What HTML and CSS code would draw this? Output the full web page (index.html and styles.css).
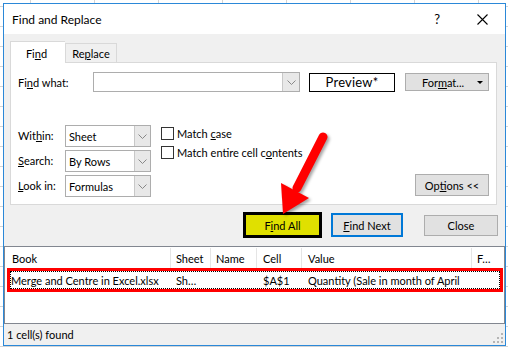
FILE: index.html
```html
<!DOCTYPE html>
<html>
<head>
<meta charset="utf-8">
<link rel="stylesheet" href="styles.css">
</head>
<body>
<div class="dialog">
  <div class="titlebar">
    <span class="title">Find and Replace</span>
    <span class="help">?</span>
    <span class="close-x"><svg width="11" height="11" viewBox="0 0 11 11"><path d="M0.5 0.5 L10.5 10.5 M10.5 0.5 L0.5 10.5" stroke="#000" stroke-width="1.1" fill="none"/></svg></span>
  </div>
  <div class="tabs">
    <div class="tab active"><span>Fi<u>n</u>d</span></div>
    <div class="tab"><span>Re<u>p</u>lace</span></div>
  </div>
  <div class="panel">
    <div class="find-row">
      <span class="lbl-find">Fi<u>n</u>d what:</span>
      <div class="combo find-combo"><span class="combo-field"></span><span class="combo-btn find-btn"><svg width="9" height="5" viewBox="0 0 9 5"><path d="M0.5 0.5 L4.5 4.5 L8.5 0.5" stroke="#888" fill="none"/></svg></span></div>
      <div class="preview">Preview*</div>
      <div class="btn format"><span>For<u>m</u>at...</span><span class="caret"></span></div>
    </div>
    <div class="lower">
      <div class="opts">
        <span class="lbl">Wit<u>h</u>in:</span>
        <div class="combo"><span class="combo-field sel">Sheet</span><span class="combo-btn"><svg width="9" height="5" viewBox="0 0 9 5"><path d="M0.5 0.5 L4.5 4.5 L8.5 0.5" stroke="#888" fill="none"/></svg></span></div>
        <span class="lbl"><u>S</u>earch:</span>
        <div class="combo"><span class="combo-field sel">By Rows</span><span class="combo-btn"><svg width="9" height="5" viewBox="0 0 9 5"><path d="M0.5 0.5 L4.5 4.5 L8.5 0.5" stroke="#888" fill="none"/></svg></span></div>
        <span class="lbl"><u>L</u>ook in:</span>
        <div class="combo"><span class="combo-field sel">Formulas</span><span class="combo-btn"><svg width="9" height="5" viewBox="0 0 9 5"><path d="M0.5 0.5 L4.5 4.5 L8.5 0.5" stroke="#888" fill="none"/></svg></span></div>
      </div>
      <div class="checks">
        <div class="check"><span class="box"></span><span>Match <u>c</u>ase</span></div>
        <div class="check"><span class="box"></span><span>Match entire cell c<u>o</u>ntents</span></div>
      </div>
      <div class="btn options"><span>Op<u>t</u>ions &lt;&lt;</span></div>
    </div>
  </div>
  <div class="actions">
    <div class="btn findall"><span>F<u>i</u>nd All</span></div>
    <div class="btn findnext"><span><u>F</u>ind Next</span></div>
    <div class="btn close"><span>Close</span></div>
  </div>
  <div class="results">
    <div class="cols head">
      <span>Book</span><span>Sheet</span><span>Name</span><span>Cell</span><span>Value</span><span>F…</span>
    </div>
    <div class="hit">
      <div class="cols data">
        <span>Merge and Centre in Excel.xlsx</span><span>Sh…</span><span></span><span>$A$1</span><span>Quantity (Sale in month of April</span><span></span>
      </div>
    </div>
  </div>
  <div class="status">
    <span>1 cell(s) found</span>
    <svg class="grip" width="10" height="10" viewBox="0 0 10 10"><g fill="#b5b5b5"><rect x="8" y="0" width="2" height="2"/><rect x="4" y="4" width="2" height="2"/><rect x="8" y="4" width="2" height="2"/><rect x="0" y="8" width="2" height="2"/><rect x="4" y="8" width="2" height="2"/><rect x="8" y="8" width="2" height="2"/></g></svg>
  </div>
</div>
<svg class="arrow" width="508" height="347" viewBox="0 0 508 347">
  <line x1="323" y1="137" x2="297" y2="188" stroke="#ff0000" stroke-width="9" stroke-linecap="round"/>
  <polygon points="281,183 309,198 283,214" fill="#ff0000"/>
</svg>
</body>
</html>
```
FILE: styles.css
```css
* { box-sizing: border-box; }
html, body { margin: 0; padding: 0; }
body {
  width: 508px;
  height: 347px;
  overflow: hidden;
  font-family: "Segoe UI", Lato, "Noto Sans", sans-serif;
  font-size: 11px;
  color: #000;
  background-color: #fff;
  background-image:
    linear-gradient(to right, #d4d4d4 1px, transparent 1px),
    linear-gradient(to bottom, #d4d4d4 1px, transparent 1px);
  background-size: 64px 20px;
  background-position: 30px 0, 0 6px;
  position: relative;
}
u { text-decoration: underline; text-underline-offset: 1px; }

.dialog {
  margin: 3px 0 0 3px;
  width: 503px;
  height: 343px;
  border: 1px solid #2b88d8;
  background: #f0f0f0;
  display: flex;
  flex-direction: column;
}

.titlebar {
  height: 30px;
  background: #fff;
  display: flex;
  align-items: center;
  padding-left: 8px;
  flex: none;
}
.title { font-size: 12px; flex: 1; }
.help { font-size: 13px; margin-right: 37px; }
.close-x { width: 11px; height: 11px; margin-right: 17px; display: flex; }

.tabs {
  display: flex;
  align-items: flex-end;
  margin: 7px 0 0 6px;
  height: 21px;
  flex: none;
}
.tab {
  height: 19px;
  width: 52px;
  border: 1px solid #d9d9d9;
  border-bottom: none;
  background: #f0f0f0;
  display: flex;
  align-items: center;
  justify-content: center;
  padding-top: 1px;
}
.tab.active {
  width: 55px;
  height: 22px;
  background: #fff;
  margin-bottom: -1px;
  position: relative;
  z-index: 1;
  border-right: none;
  padding-right: 3px;
}

.panel {
  margin: 0 8px 0 6px;
  height: 143px;
  border: 1px solid #d9d9d9;
  background: #fff;
  padding: 9px 7px 7px 7px;
  display: flex;
  flex-direction: column;
  flex: none;
}

.find-row {
  display: flex;
  align-items: center;
  height: 20px;
}
.lbl-find { width: 75px; }
.combo {
  display: flex;
  height: 22px;
  border: 1px solid #adadad;
  background: #fff;
}
.find-combo { width: 207px; height: 20px; }
.combo-field { flex: 1; display: flex; align-items: center; padding-left: 3px; }
.combo-btn {
  width: 16px;
  background: #e8e8e8;
  border-left: 1px solid #c8c8c8;
  display: flex;
  align-items: center;
  justify-content: center;
}
.find-btn { width: 17px; }

.preview {
  margin-left: 9px;
  width: 86px;
  height: 19px;
  border: 1px solid #000;
  display: flex;
  align-items: center;
  justify-content: center;
  font-size: 13px;
  letter-spacing: 0.2px;
}

.btn {
  background: #e1e1e1;
  border: 1px solid #adadad;
  display: flex;
  align-items: center;
  justify-content: center;
}
.format {
  margin-left: 10px;
  width: 84px;
  height: 18px;
  position: relative;
  padding-right: 8px;
}
.caret {
  position: absolute;
  right: 5px;
  top: 7px;
  width: 0;
  height: 0;
  border-left: 3px solid transparent;
  border-right: 3px solid transparent;
  border-top: 3px solid #000;
}

.lower {
  margin-top: 33px;
  display: flex;
  align-items: flex-end;
}
.opts {
  display: grid;
  grid-template-columns: 47px 86px;
  grid-auto-rows: 22px;
  row-gap: 3px;
  align-items: center;
}
.lbl { line-height: 22px; }

.checks {
  align-self: flex-start;
  margin-left: 10px;
  padding-top: 2px;
  flex: 1;
  display: flex;
  flex-direction: column;
  gap: 6px;
}
.check { display: flex; align-items: center; height: 13px; font-size: 11px; }
.box {
  width: 13px;
  height: 13px;
  border: 1px solid #333;
  background: #fff;
  margin-right: 3px;
}
.options {
  width: 74px;
  height: 22px;
  margin-bottom: 1px;
  font-size: 11px;
}

.actions {
  margin-top: 7px;
  height: 26px;
  display: flex;
  align-items: center;
  justify-content: flex-end;
  padding-right: 7px;
  flex: none;
  font-size: 11px;
}
.findall {
  width: 79px;
  height: 26px;
  background: #e0e000;
  border: 3px solid #000;
}
.findnext {
  margin-left: 9px;
  width: 72px;
  height: 24px;
  border: 2px solid #0078d7;
}
.close {
  margin-left: 21px;
  width: 74px;
  height: 21px;
}

.results {
  margin-top: 8px;
  height: 78px;
  border: 1px solid #828790;
  background: #fff;
  flex: none;
}
.cols {
  display: grid;
  grid-template-columns: 166px 40px 46px 45px 170px 1fr;
  align-items: center;
  white-space: nowrap;
}
.cols span { padding-left: 5px; overflow: hidden; }
.head { height: 21px; padding-top: 1px; }
.head span { border-right: 1px solid #e5e5e5; height: 20px; line-height: 22px; }
.head span:first-child { padding-left: 7px; }
.head span:nth-child(4), .head span:nth-child(5) { padding-left: 6px; }
.head span:last-child { border-right: none; }

.hit {
  margin-left: 2px;
  width: 496px;
  height: 24px;
  border: 3px solid #ff0000;
}
.data {
  height: 18px;
  border: 1px dotted #000;
  grid-template-columns: 160px 40px 46px 45px 170px 1fr;
}
.data span:first-child { padding-left: 0; }
.data span:nth-child(4), .data span:nth-child(5) { padding-left: 6px; }

.status {
  flex: 1;
  display: flex;
  align-items: center;
  justify-content: space-between;
  padding: 0 2px 0 3px;
  position: relative;
}
.grip { align-self: flex-end; margin-bottom: 2px; }

.arrow {
  position: absolute;
  left: 0;
  top: 0;
  pointer-events: none;
  filter: drop-shadow(2px 2px 1.5px rgba(0,0,0,0.35));
}
```
